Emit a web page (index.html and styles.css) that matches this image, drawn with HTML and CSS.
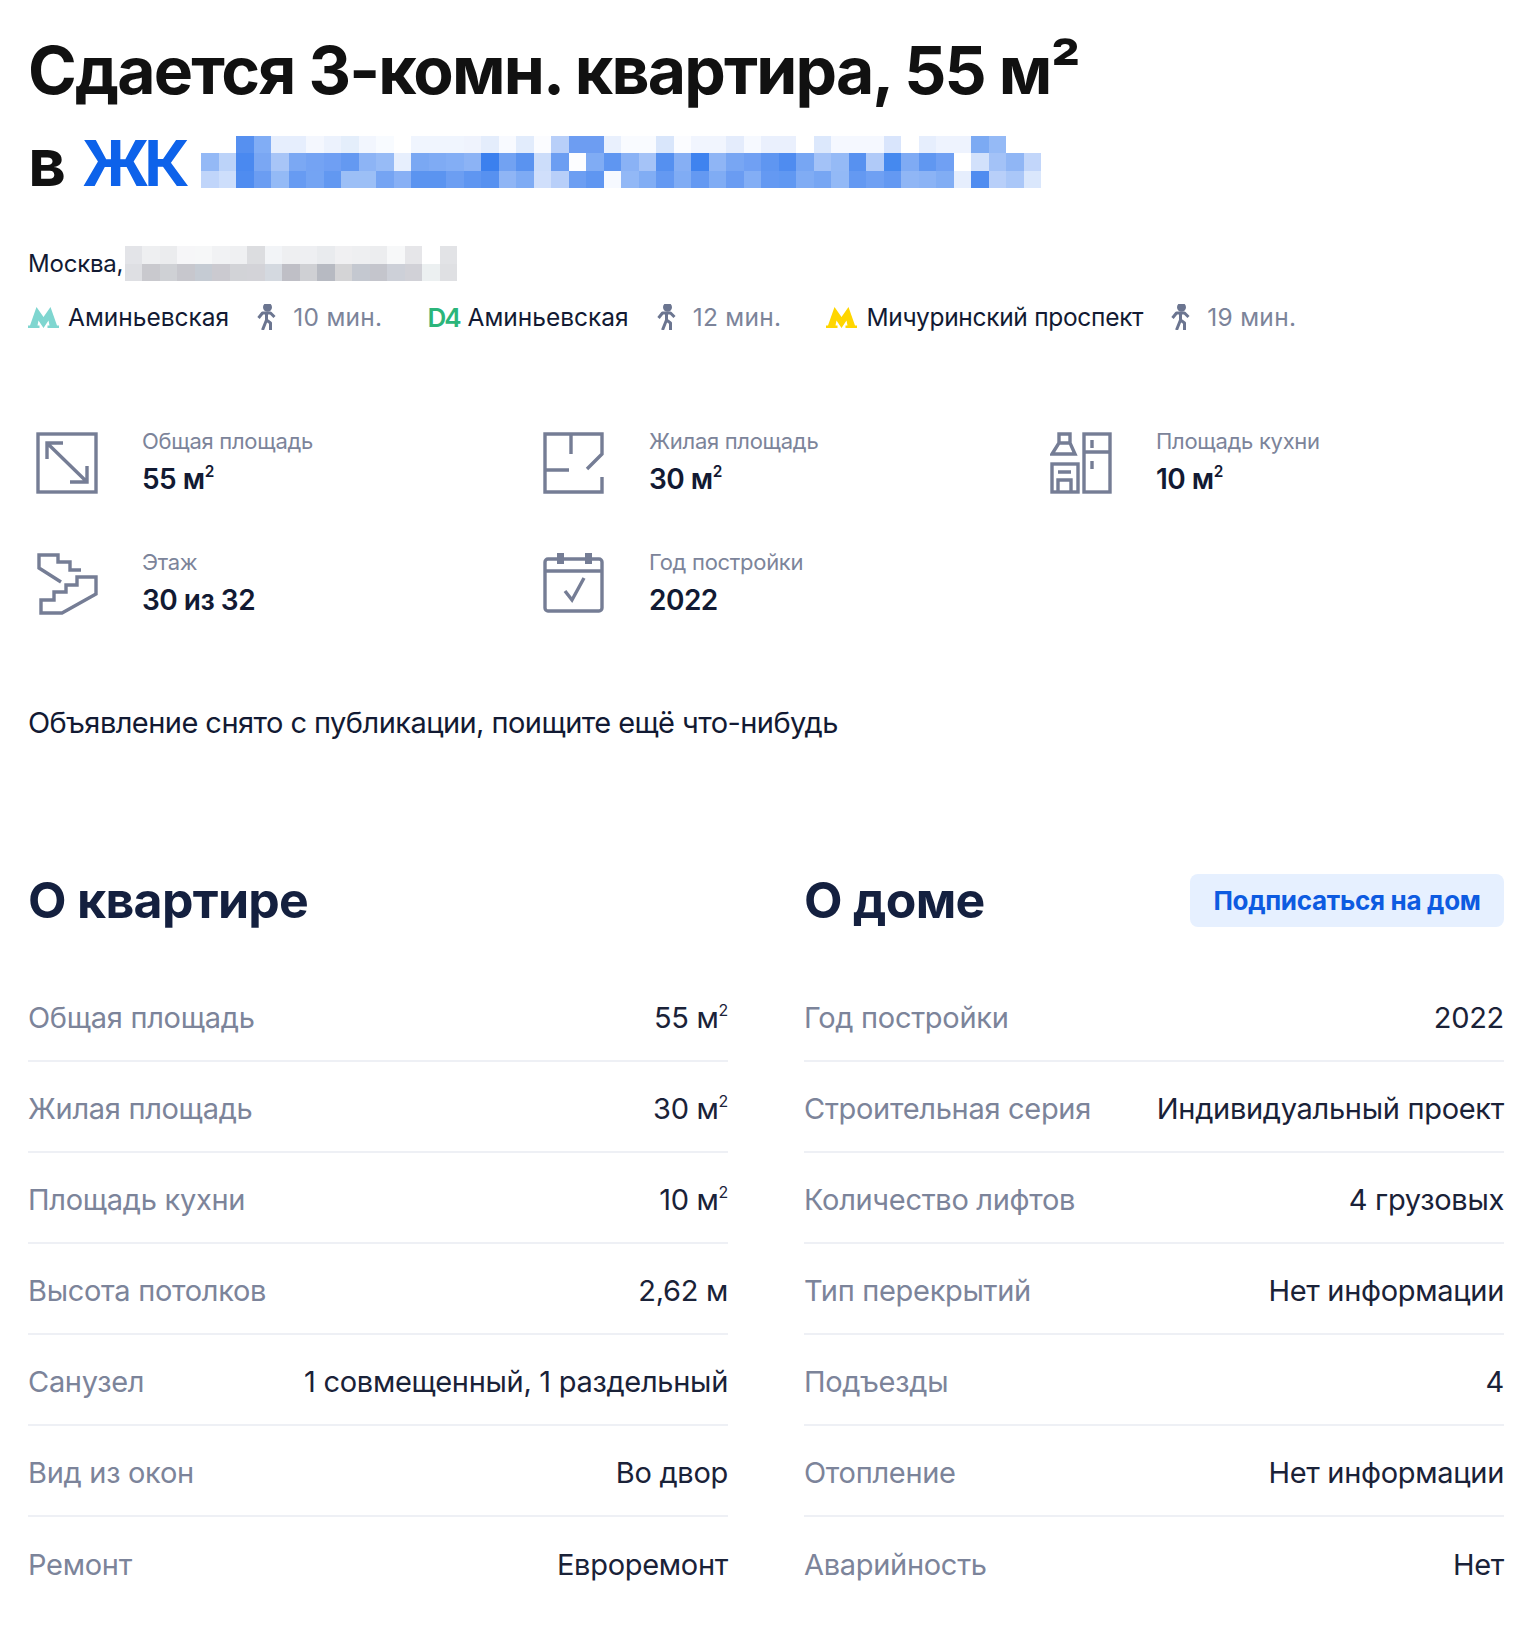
FILE: index.html
```html
<!DOCTYPE html>
<html lang="ru">
<head>
<meta charset="utf-8">
<title>Сдается 3-комн. квартира</title>
<link rel="stylesheet" href="styles.css">
</head>
<body>
<main class="page">
  <h1 class="title">Сдается 3-комн. квартира, 55 м²<br>в <a class="title-link">ЖК</a><svg class="pixels-title" viewBox="0 0 48 3" preserveAspectRatio="none" shape-rendering="crispEdges" aria-hidden="true">
    <g>
      <rect x="2" y="0" width="1" height="1" fill="#5690f0"/><rect x="3" y="0" width="1" height="1" fill="#81adf5"/><rect x="4" y="0" width="1" height="1" fill="#e6eefd"/><rect x="5" y="0" width="1" height="1" fill="#e6eefd"/><rect x="6" y="0" width="1" height="1" fill="#f4f7fe"/><rect x="7" y="0" width="1" height="1" fill="#ecf2fd"/><rect x="8" y="0" width="1" height="1" fill="#e4eefb"/><rect x="9" y="0" width="1" height="1" fill="#f2f6fe"/><rect x="10" y="0" width="1" height="1" fill="#f8fbff"/><rect x="12" y="0" width="1" height="1" fill="#f0f5fe"/><rect x="13" y="0" width="1" height="1" fill="#f0f5fe"/><rect x="14" y="0" width="1" height="1" fill="#f0f5fe"/><rect x="15" y="0" width="1" height="1" fill="#eff3fd"/><rect x="16" y="0" width="1" height="1" fill="#e4edfc"/><rect x="17" y="0" width="1" height="1" fill="#f8faff"/><rect x="18" y="0" width="1" height="1" fill="#e2ecfc"/><rect x="19" y="0" width="1" height="1" fill="#fbfcff"/><rect x="20" y="0" width="1" height="1" fill="#b8cff9"/><rect x="21" y="0" width="1" height="1" fill="#6d9df2"/><rect x="22" y="0" width="1" height="1" fill="#6d9df2"/><rect x="23" y="0" width="1" height="1" fill="#e9f0fd"/><rect x="24" y="0" width="1" height="1" fill="#f9fbff"/><rect x="25" y="0" width="1" height="1" fill="#f9fbff"/><rect x="26" y="0" width="1" height="1" fill="#d9e6fb"/><rect x="27" y="0" width="1" height="1" fill="#fbfcff"/><rect x="28" y="0" width="1" height="1" fill="#f1f5fe"/><rect x="29" y="0" width="1" height="1" fill="#f1f5fe"/><rect x="30" y="0" width="1" height="1" fill="#e4ecfc"/><rect x="31" y="0" width="1" height="1" fill="#f6f9ff"/><rect x="32" y="0" width="1" height="1" fill="#eaf0fd"/><rect x="33" y="0" width="1" height="1" fill="#eaf0fd"/><rect x="35" y="0" width="1" height="1" fill="#dce8fc"/><rect x="36" y="0" width="1" height="1" fill="#f5f8ff"/><rect x="37" y="0" width="1" height="1" fill="#f5f8ff"/><rect x="38" y="0" width="1" height="1" fill="#f5f8ff"/><rect x="39" y="0" width="1" height="1" fill="#d9e5fc"/><rect x="41" y="0" width="1" height="1" fill="#e6eefd"/><rect x="42" y="0" width="1" height="1" fill="#eef3fe"/><rect x="43" y="0" width="1" height="1" fill="#eef3fe"/><rect x="44" y="0" width="1" height="1" fill="#7caaf3"/><rect x="45" y="0" width="1" height="1" fill="#95baf6"/>
      <rect x="0" y="1" width="1" height="1" fill="#94b9f6"/><rect x="1" y="1" width="1" height="1" fill="#bcd3f9"/><rect x="2" y="1" width="1" height="1" fill="#4a89f0"/><rect x="3" y="1" width="1" height="1" fill="#7aa7f3"/><rect x="4" y="1" width="1" height="1" fill="#a8c5f7"/><rect x="5" y="1" width="1" height="1" fill="#7ba8f3"/><rect x="6" y="1" width="1" height="1" fill="#74a3f3"/><rect x="7" y="1" width="1" height="1" fill="#6f9ff3"/><rect x="8" y="1" width="1" height="1" fill="#6499f1"/><rect x="9" y="1" width="1" height="1" fill="#8db4f5"/><rect x="10" y="1" width="1" height="1" fill="#97bbf6"/><rect x="11" y="1" width="1" height="1" fill="#e7effd"/><rect x="12" y="1" width="1" height="1" fill="#7aa8f3"/><rect x="13" y="1" width="1" height="1" fill="#7fabf4"/><rect x="14" y="1" width="1" height="1" fill="#83aef5"/><rect x="15" y="1" width="1" height="1" fill="#8cb3f5"/><rect x="16" y="1" width="1" height="1" fill="#3b80ee"/><rect x="17" y="1" width="1" height="1" fill="#72a2f2"/><rect x="18" y="1" width="1" height="1" fill="#5a93f0"/><rect x="19" y="1" width="1" height="1" fill="#ccddfa"/><rect x="20" y="1" width="1" height="1" fill="#6c9ef2"/><rect x="21" y="1" width="1" height="1" fill="#fcfdff"/><rect x="22" y="1" width="1" height="1" fill="#80acf4"/><rect x="23" y="1" width="1" height="1" fill="#5f96f1"/><rect x="24" y="1" width="1" height="1" fill="#8ab2f5"/><rect x="25" y="1" width="1" height="1" fill="#a5c3f7"/><rect x="26" y="1" width="1" height="1" fill="#5590f0"/><rect x="27" y="1" width="1" height="1" fill="#86aff4"/><rect x="28" y="1" width="1" height="1" fill="#3f83ef"/><rect x="29" y="1" width="1" height="1" fill="#8fb5f5"/><rect x="30" y="1" width="1" height="1" fill="#78a6f3"/><rect x="31" y="1" width="1" height="1" fill="#70a0f3"/><rect x="32" y="1" width="1" height="1" fill="#5f96f1"/><rect x="33" y="1" width="1" height="1" fill="#4f8cf0"/><rect x="34" y="1" width="1" height="1" fill="#77a6f3"/><rect x="35" y="1" width="1" height="1" fill="#a3c2f7"/><rect x="36" y="1" width="1" height="1" fill="#95baf6"/><rect x="37" y="1" width="1" height="1" fill="#5791f0"/><rect x="38" y="1" width="1" height="1" fill="#b0caf8"/><rect x="39" y="1" width="1" height="1" fill="#4589ef"/><rect x="40" y="1" width="1" height="1" fill="#7fabf4"/><rect x="41" y="1" width="1" height="1" fill="#6097f1"/><rect x="42" y="1" width="1" height="1" fill="#70a0f3"/><rect x="44" y="1" width="1" height="1" fill="#d2e1fb"/><rect x="45" y="1" width="1" height="1" fill="#a3c2f7"/><rect x="46" y="1" width="1" height="1" fill="#90b6f5"/><rect x="47" y="1" width="1" height="1" fill="#c2d6fa"/>
      <rect x="0" y="2" width="1" height="1" fill="#c0d5fa"/><rect x="1" y="2" width="1" height="1" fill="#cddefb"/><rect x="2" y="2" width="1" height="1" fill="#4f8cf0"/><rect x="3" y="2" width="1" height="1" fill="#6b9df2"/><rect x="4" y="2" width="1" height="1" fill="#94baf6"/><rect x="5" y="2" width="1" height="1" fill="#679bf2"/><rect x="6" y="2" width="1" height="1" fill="#74a4f3"/><rect x="7" y="2" width="1" height="1" fill="#6298f1"/><rect x="8" y="2" width="1" height="1" fill="#9cbff6"/><rect x="9" y="2" width="1" height="1" fill="#9cbff6"/><rect x="10" y="2" width="1" height="1" fill="#75a4f3"/><rect x="11" y="2" width="1" height="1" fill="#88b0f5"/><rect x="12" y="2" width="1" height="1" fill="#5b94f0"/><rect x="13" y="2" width="1" height="1" fill="#5b94f0"/><rect x="14" y="2" width="1" height="1" fill="#6c9ef2"/><rect x="15" y="2" width="1" height="1" fill="#5f96f1"/><rect x="16" y="2" width="1" height="1" fill="#5791f0"/><rect x="17" y="2" width="1" height="1" fill="#8fb5f5"/><rect x="18" y="2" width="1" height="1" fill="#7eabf4"/><rect x="19" y="2" width="1" height="1" fill="#d0dffb"/><rect x="20" y="2" width="1" height="1" fill="#b8cff9"/><rect x="21" y="2" width="1" height="1" fill="#6c9ef2"/><rect x="22" y="2" width="1" height="1" fill="#5f96f1"/><rect x="23" y="2" width="1" height="1" fill="#f6f9ff"/><rect x="24" y="2" width="1" height="1" fill="#92b8f6"/><rect x="25" y="2" width="1" height="1" fill="#81adf4"/><rect x="26" y="2" width="1" height="1" fill="#6499f2"/><rect x="27" y="2" width="1" height="1" fill="#80acf4"/><rect x="28" y="2" width="1" height="1" fill="#6499f2"/><rect x="29" y="2" width="1" height="1" fill="#80acf4"/><rect x="30" y="2" width="1" height="1" fill="#6a9cf2"/><rect x="31" y="2" width="1" height="1" fill="#83aef5"/><rect x="32" y="2" width="1" height="1" fill="#6499f2"/><rect x="33" y="2" width="1" height="1" fill="#6098f2"/><rect x="34" y="2" width="1" height="1" fill="#80acf4"/><rect x="35" y="2" width="1" height="1" fill="#77a6f3"/><rect x="36" y="2" width="1" height="1" fill="#93b9f6"/><rect x="37" y="2" width="1" height="1" fill="#6499f2"/><rect x="38" y="2" width="1" height="1" fill="#6fa0f3"/><rect x="39" y="2" width="1" height="1" fill="#6499f2"/><rect x="40" y="2" width="1" height="1" fill="#90b6f5"/><rect x="41" y="2" width="1" height="1" fill="#8bb3f5"/><rect x="42" y="2" width="1" height="1" fill="#81adf4"/><rect x="43" y="2" width="1" height="1" fill="#e6eefd"/><rect x="44" y="2" width="1" height="1" fill="#4f8cf0"/><rect x="45" y="2" width="1" height="1" fill="#b8cff9"/><rect x="46" y="2" width="1" height="1" fill="#aac7f8"/><rect x="47" y="2" width="1" height="1" fill="#dae7fc"/>
    </g></svg></h1>

  <div class="address"><span>Москва,</span><svg class="pixels-address" viewBox="0 0 19 2" preserveAspectRatio="none" shape-rendering="crispEdges" aria-hidden="true">
    <rect x="0" y="0" width="1" height="1" fill="#e3e4e8"/><rect x="1" y="0" width="1" height="1" fill="#eeeff1"/><rect x="2" y="0" width="1" height="1" fill="#ebecee"/><rect x="3" y="0" width="1" height="1" fill="#f6f6f8"/><rect x="4" y="0" width="1" height="1" fill="#f6f7f8"/><rect x="5" y="0" width="1" height="1" fill="#f1f2f4"/><rect x="6" y="0" width="1" height="1" fill="#eff0f2"/><rect x="7" y="0" width="1" height="1" fill="#dcdde0"/><rect x="8" y="0" width="1" height="1" fill="#f2f4f7"/><rect x="9" y="0" width="1" height="1" fill="#eeeff1"/><rect x="10" y="0" width="1" height="1" fill="#eeeff2"/><rect x="11" y="0" width="1" height="1" fill="#e9ebee"/><rect x="12" y="0" width="1" height="1" fill="#f0f0f2"/><rect x="13" y="0" width="1" height="1" fill="#eeeff1"/><rect x="14" y="0" width="1" height="1" fill="#ecedef"/><rect x="15" y="0" width="1" height="1" fill="#f7f8f9"/><rect x="16" y="0" width="1" height="1" fill="#e6e6e9"/><rect x="18" y="0" width="1" height="1" fill="#e2e3e6"/>
    <rect x="0" y="1" width="1" height="1" fill="#dedfe3"/><rect x="1" y="1" width="1" height="1" fill="#c9c9ce"/><rect x="2" y="1" width="1" height="1" fill="#cfd1d5"/><rect x="3" y="1" width="1" height="1" fill="#c7c7cd"/><rect x="4" y="1" width="1" height="1" fill="#c5cbd3"/><rect x="5" y="1" width="1" height="1" fill="#cbcad0"/><rect x="6" y="1" width="1" height="1" fill="#d2d3d7"/><rect x="7" y="1" width="1" height="1" fill="#d3d3d8"/><rect x="8" y="1" width="1" height="1" fill="#d4d9e0"/><rect x="9" y="1" width="1" height="1" fill="#bfbfc6"/><rect x="10" y="1" width="1" height="1" fill="#cfd0d4"/><rect x="11" y="1" width="1" height="1" fill="#b7bac2"/><rect x="12" y="1" width="1" height="1" fill="#d4d4d6"/><rect x="13" y="1" width="1" height="1" fill="#c4c8d0"/><rect x="14" y="1" width="1" height="1" fill="#c4c5cc"/><rect x="15" y="1" width="1" height="1" fill="#cdd0d8"/><rect x="16" y="1" width="1" height="1" fill="#d1d1d7"/><rect x="17" y="1" width="1" height="1" fill="#ecf0f1"/><rect x="18" y="1" width="1" height="1" fill="#dfe0e3"/>
  </svg></div>

  <div class="metro">
    <div class="metro-item">
      <svg class="metro-logo" viewBox="0 0 31 21" aria-hidden="true"><path class="logo-teal" d="M0 21v-2.500h2L8.500 0l7 10 7-10L29 18.500h2V21H19.500v-2.500h2l-1-5-5 7.500-5-7.500-1 5h2V21z"/></svg>
      <span class="metro-name">Аминьевская</span>
      <svg class="walk" viewBox="0 0 20 26" aria-hidden="true"><circle cx="10.500" cy="3.300" r="3"/><path d="M1.500 14l4-5h8l4 4M9.500 9v7l4 3v7M9.500 16l-4 10"/></svg>
      <span class="metro-time">10 мин.</span>
    </div>
    <div class="metro-item">
      <span class="metro-line">D4</span>
      <span class="metro-name">Аминьевская</span>
      <svg class="walk" viewBox="0 0 20 26" aria-hidden="true"><circle cx="10.500" cy="3.300" r="3"/><path d="M1.500 14l4-5h8l4 4M9.500 9v7l4 3v7M9.500 16l-4 10"/></svg>
      <span class="metro-time">12 мин.</span>
    </div>
    <div class="metro-item">
      <svg class="metro-logo" viewBox="0 0 31 21" aria-hidden="true"><path class="logo-yellow" d="M0 21v-2.500h2L8.500 0l7 10 7-10L29 18.500h2V21H19.500v-2.500h2l-1-5-5 7.500-5-7.500-1 5h2V21z"/></svg>
      <span class="metro-name metro-name-long">Мичуринский проспект</span>
      <svg class="walk" viewBox="0 0 20 26" aria-hidden="true"><circle cx="10.500" cy="3.300" r="3"/><path d="M1.500 14l4-5h8l4 4M9.500 9v7l4 3v7M9.500 16l-4 10"/></svg>
      <span class="metro-time">19 мин.</span>
    </div>
  </div>

  <section class="stats">
    <div class="stat">
      <svg class="stat-icon" viewBox="0 0 62 62" aria-hidden="true"><rect x="2" y="2" width="58" height="58"/><path d="M11 27V11h16M11 11l40 39M34 50h17V34"/></svg>
      <div class="stat-text"><div class="stat-label">Общая площадь</div><div class="stat-value">55 м<span class="sq">2</span></div></div>
    </div>
    <div class="stat">
      <svg class="stat-icon" viewBox="0 0 62 62" aria-hidden="true"><path d="M44 37l15-15V2H2v58h57V45M28 2v20M2 38h24"/></svg>
      <div class="stat-text"><div class="stat-label">Жилая площадь</div><div class="stat-value">30 м<span class="sq">2</span></div></div>
    </div>
    <div class="stat">
      <svg class="stat-icon" viewBox="0 0 62 62" aria-hidden="true"><rect x="34" y="2" width="26" height="58"/><path d="M34 20h26M42 8v8M42 29v8M9 2h11v9l5 11H2l7-11zM9 11h11"/><rect x="2" y="32" width="26" height="28"/><path d="M8 40h13M8 60V48h13v12"/></svg>
      <div class="stat-text"><div class="stat-label">Площадь кухни</div><div class="stat-value">10 м<span class="sq">2</span></div></div>
    </div>
    <div class="stat">
      <svg class="stat-icon" viewBox="0 0 62 62" aria-hidden="true"><path d="M25 29L3 15V2h19v7h12v8h11M60 24H41v8H30v7H18v8H5v13h21l34-19z"/></svg>
      <div class="stat-text"><div class="stat-label">Этаж</div><div class="stat-value">30 из 32</div></div>
    </div>
    <div class="stat">
      <svg class="stat-icon" viewBox="0 0 62 62" aria-hidden="true"><rect x="2" y="6" width="57" height="52" rx="3"/><path d="M2 18h57M22 38l7 9 12-22"/><path class="icon-fill" d="M14 0h7v11h-7zM42 0h7v11h-7z"/></svg>
      <div class="stat-text"><div class="stat-label">Год постройки</div><div class="stat-value">2022</div></div>
    </div>
  </section>

  <p class="notice">Объявление снято с публикации, поищите ещё что-нибудь</p>

  <section class="details">
    <div class="details-col">
      <div class="details-head"><h2 class="details-title">О квартире</h2></div>
      <div class="row"><span class="row-label">Общая площадь</span><span class="row-value">55 м<span class="sq">2</span></span></div>
      <div class="row"><span class="row-label">Жилая площадь</span><span class="row-value">30 м<span class="sq">2</span></span></div>
      <div class="row"><span class="row-label">Площадь кухни</span><span class="row-value">10 м<span class="sq">2</span></span></div>
      <div class="row"><span class="row-label">Высота потолков</span><span class="row-value">2,62 м</span></div>
      <div class="row"><span class="row-label">Санузел</span><span class="row-value">1 совмещенный, 1 раздельный</span></div>
      <div class="row"><span class="row-label">Вид из окон</span><span class="row-value">Во двор</span></div>
      <div class="row"><span class="row-label">Ремонт</span><span class="row-value">Евроремонт</span></div>
    </div>
    <div class="details-col">
      <div class="details-head"><h2 class="details-title">О доме</h2><button class="subscribe">Подписаться на дом</button></div>
      <div class="row"><span class="row-label">Год постройки</span><span class="row-value">2022</span></div>
      <div class="row"><span class="row-label">Строительная серия</span><span class="row-value">Индивидуальный проект</span></div>
      <div class="row"><span class="row-label">Количество лифтов</span><span class="row-value">4 грузовых</span></div>
      <div class="row"><span class="row-label">Тип перекрытий</span><span class="row-value">Нет информации</span></div>
      <div class="row"><span class="row-label">Подъезды</span><span class="row-value">4</span></div>
      <div class="row"><span class="row-label">Отопление</span><span class="row-value">Нет информации</span></div>
      <div class="row"><span class="row-label">Аварийность</span><span class="row-value">Нет</span></div>
    </div>
  </section>
</main>
</body>
</html>
```

FILE: styles.css
```css
body { margin: 0; background: #fff; font-family: Inter, "Noto Sans", sans-serif; color: #121a33; }
.page { padding: 24px 36px 0 28px; }

.title { margin: 0; font-size: 66px; line-height: 92px; font-weight: 700; color: #111; letter-spacing: -1.85px; }
.title-link { margin-left: 4px; font-size: 63px; color: #0d62ea; letter-spacing: -5px; }
.pixels-title { display: inline-block; width: 840px; height: 52px; margin-left: 16px; vertical-align: -2px; }

.address { display: flex; align-items: center; height: 35px; margin-top: 37px; font-size: 24px; letter-spacing: -0.2px; }
.pixels-address { display: block; width: 332px; height: 35px; margin-left: 2px; }

.metro { display: flex; gap: 45px; margin-top: 21px; font-size: 24.5px; }
.metro-item { display: flex; align-items: center; height: 30px; }
.metro-logo { width: 31px; height: 21px; margin-right: 9px; }
.logo-teal { fill: #7fd6d0; }
.logo-yellow { fill: #ffd600; }
.metro-line { width: 31px; margin-right: 9px; font-size: 26px; font-weight: 600; letter-spacing: -2px; color: #2bb57a; }
.metro-name-long { letter-spacing: -0.3px; }
.metro-time { color: #7c849a; letter-spacing: 0.3px; }
.walk { width: 20px; height: 26px; margin: 0 16px 0 28px; fill: #6b7590; stroke: #6b7590; stroke-width: 3; stroke-linejoin: round; }
.walk path { fill: none; }

.stats { display: grid; grid-template-columns: repeat(3, 507px); row-gap: 59px; margin-top: 100px; padding-left: 8px; }
.stat { display: flex; align-items: center; gap: 44px; height: 62px; }
.stat-icon { flex: none; width: 62px; height: 62px; fill: none; stroke: #757d95; stroke-width: 3.400; }
.icon-fill { fill: #757d95; stroke: none; }
.stat-text { padding-bottom: 3px; }
.stat-label { font-size: 22px; line-height: 30px; color: #7c849a; letter-spacing: -0.3px; }
.stat-value { margin-top: 4px; font-size: 28px; line-height: 38px; font-weight: 600; color: #121a33; letter-spacing: -0.5px; }
.sq { font-size: 0.55em; line-height: 0; vertical-align: 0.75em; }

.notice { margin: 88px 0 0; font-size: 29px; line-height: 40px; color: #121a33; letter-spacing: -0.55px; }

.details { display: grid; grid-template-columns: 700px 700px; column-gap: 76px; margin-top: 130px; }
.details-head { display: flex; align-items: center; justify-content: space-between; height: 54px; margin-bottom: 44px; }
.details-title { margin: 0; font-size: 50px; line-height: 54px; font-weight: 700; color: #14203f; letter-spacing: -0.7px; }
.subscribe { width: 314px; height: 53px; border: 0; border-radius: 8px; background: #e6f0ff; color: #0d5be1; font: 700 26px Inter, sans-serif; letter-spacing: -0.3px; }

.row { display: flex; justify-content: space-between; align-items: center; height: 91px; padding-top: 4px; box-sizing: border-box; border-bottom: 2px solid #eef0f5; font-size: 29px; }
.row:last-child { border-bottom: 0; }
.row-label { color: #7c849a; letter-spacing: -0.3px; }
.row-value { color: #1a2238; letter-spacing: -0.3px; }
```
